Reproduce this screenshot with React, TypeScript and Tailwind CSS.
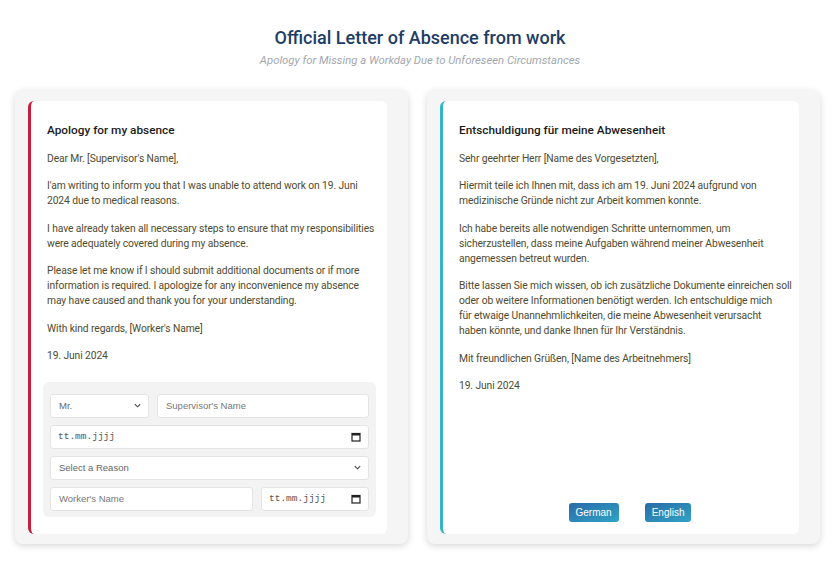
import React from 'react';

const FONT = { fontFamily: 'Roboto, "Open Sans", Arial, sans-serif' };

// ── Small form controls ───────────────────────────────────────────────────────
function Chevron() {
  return (
    <svg width="9" height="9" viewBox="0 0 10 10" className="shrink-0">
      <path d="M2 3.5 L5 6.5 L8 3.5" fill="none" stroke="#444" strokeWidth="1.2" />
    </svg>
  );
}

function CalendarIcon() {
  return (
    <svg width="10" height="10" viewBox="0 0 10 10" className="shrink-0">
      <rect x="1" y="1.5" width="8" height="7.5" fill="none" stroke="#222" strokeWidth="1.2" />
      <rect x="1" y="1.5" width="8" height="2" fill="#222" />
    </svg>
  );
}

function FakeSelect({ label, className = '' }: { label: string; className?: string }) {
  return (
    <div
      className={`flex h-[24px] items-center justify-between rounded-[3px] border border-[#e4e4e4] bg-white pl-[8px] pr-[6px] text-[9.5px] text-[#666] ${className}`}
      style={{ fontFamily: 'Arial, "Liberation Sans", sans-serif' }}
    >
      <span>{label}</span>
      <Chevron />
    </div>
  );
}

function FakeInput({ placeholder, className = '' }: { placeholder: string; className?: string }) {
  return (
    <div
      className={`flex h-[24px] items-center rounded-[3px] border border-[#e4e4e4] bg-white px-[8px] text-[9.5px] text-[#777] ${className}`}
      style={{ fontFamily: 'Arial, "Liberation Sans", sans-serif' }}
    >
      {placeholder}
    </div>
  );
}

function FakeDate({ className = '' }: { className?: string }) {
  return (
    <div
      className={`flex h-[24px] items-center justify-between rounded-[3px] border border-[#e4e4e4] bg-white pl-[7px] pr-[7px] text-[9.5px] text-[#555] ${className}`}
    >
      <span style={{ fontFamily: '"Liberation Mono", "DejaVu Sans Mono", monospace' }}>tt.mm.jjjj</span>
      <CalendarIcon />
    </div>
  );
}

// ── Letter card ───────────────────────────────────────────────────────────────
interface LetterProps {
  title: string;
  paragraphs: React.ReactNode[];
  accent: string;
  padRight: string;
  footer: React.ReactNode;
}

function LetterCard({ title, paragraphs, accent, padRight, footer }: LetterProps) {
  return (
    <div className="min-w-0 flex-1 basis-0 rounded-[8px] bg-[#f5f5f5] pl-[13px] pr-[21px] pt-[11px] pb-[10px] shadow-[0_2px_7px_rgba(0,0,0,0.16)]">
      <div
        className={`flex h-full flex-col rounded-[6px] border-l-[3px] bg-white pl-[16px] pt-[21px] pb-[12px] ${accent} ${padRight}`}
      >
        <h2 className="mb-[11px] text-[11.8px] font-medium text-[#1b1b1b]">{title}</h2>
        <div className="flex flex-col gap-[12.5px] text-[10.3px] leading-[15px] tracking-[-0.1px] text-[#4e4b30]">
          {paragraphs.map((p, i) => (
            <p key={i}>{p}</p>
          ))}
        </div>
        <div className="mt-auto">{footer}</div>
      </div>
    </div>
  );
}

const EN = [
  "Dear Mr. [Supervisor's Name],",
  "I'am writing to inform you that I was unable to attend work on 19. Juni 2024 due to medical reasons.",
  'I have already taken all necessary steps to ensure that my responsibilities were adequately covered during my absence.',
  'Please let me know if I should submit additional documents or if more information is required. I apologize for any inconvenience my absence may have caused and thank you for your understanding.',
  "With kind regards, [Worker's Name]",
  '19. Juni 2024',
];

const DE: React.ReactNode[] = [
  'Sehr geehrter Herr [Name des Vorgesetzten],',
  'Hiermit teile ich Ihnen mit, dass ich am 19. Juni 2024 aufgrund von medizinische Gründe nicht zur Arbeit kommen konnte.',
  'Ich habe bereits alle notwendigen Schritte unternommen, um sicherzustellen, dass meine Aufgaben während meiner Abwesenheit angemessen betreut wurden.',
  <>
    <span className="whitespace-nowrap">
      Bitte lassen Sie mich wissen, ob ich zusätzliche Dokumente einreichen soll
    </span>{' '}
    oder ob weitere Informationen benötigt werden. Ich entschuldige mich für etwaige
    Unannehmlichkeiten, die meine Abwesenheit verursacht haben könnte, und danke Ihnen für Ihr
    Verständnis.
  </>,
  'Mit freundlichen Grüßen, [Name des Arbeitnehmers]',
  '19. Juni 2024',
];

function FormPanel() {
  return (
    <div className="-ml-[4px] mr-[-1px] mb-[5px] flex flex-col gap-[7px] rounded-[6px] bg-[#f3f3f3] px-[7px] pt-[12px] pb-[6px]">
      <div className="flex gap-[8px]">
        <FakeSelect label="Mr." className="w-[99px]" />
        <FakeInput placeholder="Supervisor's Name" className="flex-1" />
      </div>
      <FakeDate />
      <FakeSelect label="Select a Reason" />
      <div className="flex gap-[8px]">
        <FakeInput placeholder="Worker's Name" className="flex-1" />
        <FakeDate className="w-[108px]" />
      </div>
    </div>
  );
}

function LangButtons() {
  return (
    <div
      className="flex justify-center gap-[26px] pl-[25px]"
      style={{ fontFamily: 'Arial, "Liberation Sans", sans-serif' }}
    >
      {['German', 'English'].map((l) => (
        <button
          key={l}
          type="button"
          className="h-[19px] rounded-[3px] bg-gradient-to-br from-[#2a6aa6] to-[#2fa5c6] px-[7px] text-[10px] text-white"
        >
          {l}
        </button>
      ))}
    </div>
  );
}

export default function App() {
  return (
    <div className="h-[570px] w-[840px] bg-white" style={FONT}>
      <header className="flex flex-col items-center pt-[26px]">
        <h1 className="text-[18px] font-medium leading-[24px] text-[#1e3d66]">
          Official Letter of Absence from work
        </h1>
        <p className="mt-[3px] text-[11.3px] italic text-[#a2a7ad]">
          Apology for Missing a Workday Due to Unforeseen Circumstances
        </p>
      </header>

      <main className="mt-[20px] flex h-[454px] gap-[19px] pl-[15px] pr-[20px]">
        <LetterCard
          title="Apology for my absence"
          paragraphs={EN}
          accent="border-[#c41e3a]"
          padRight="pr-[12px]"
          footer={<FormPanel />}
        />
        <LetterCard
          title="Entschuldigung für meine Abwesenheit"
          paragraphs={DE}
          accent="border-[#34b6c6]"
          padRight="pr-[23px]"
          footer={<LangButtons />}
        />
      </main>
    </div>
  );
}
